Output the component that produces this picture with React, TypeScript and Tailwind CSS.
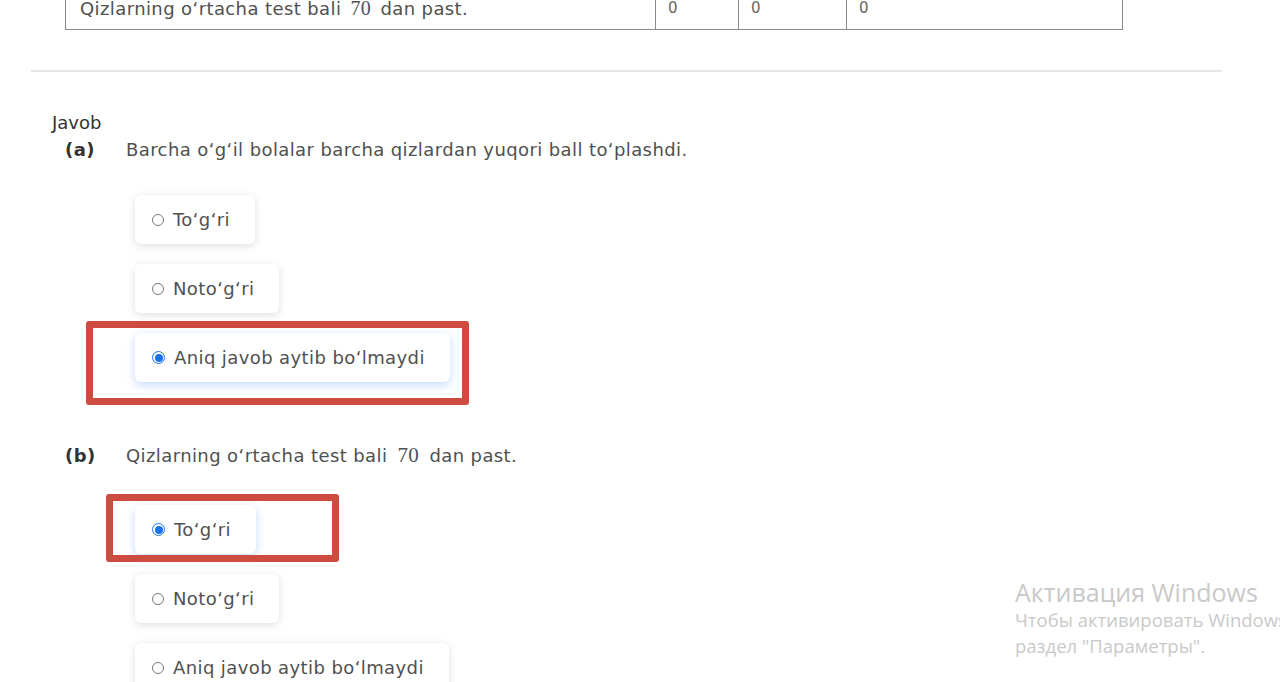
import React from 'react'

type Opt = { label: string; checked?: boolean; mark?: 'wide' | 'narrow' }

const partA: Opt[] = [
  { label: 'To‘g‘ri' },
  { label: 'Noto‘g‘ri' },
  { label: 'Aniq javob aytib bo‘lmaydi', checked: true, mark: 'wide' },
]

const partB: Opt[] = [
  { label: 'To‘g‘ri', checked: true, mark: 'narrow' },
  { label: 'Noto‘g‘ri' },
  { label: 'Aniq javob aytib bo‘lmaydi' },
]

function Radio({ checked }: { checked?: boolean }) {
  if (checked) {
    return (
      <span className="flex h-[13px] w-[13px] shrink-0 items-center justify-center rounded-full border border-[#1a73e8] bg-white">
        <span className="h-[8px] w-[8px] rounded-full bg-[#1a73e8]" />
      </span>
    )
  }
  return <span className="h-[12px] w-[12px] shrink-0 rounded-full border border-[#777]" />
}

function Option({ opt }: { opt: Opt }) {
  return (
    <div
      className={`relative flex h-[49px] items-center gap-[9px] rounded-md bg-white pl-[17px] pr-[25px] text-[18px] tracking-[0.4px] text-[#505050] ${
        opt.checked ? 'shadow-[0_3px_10px_rgba(40,120,255,0.28)]' : 'shadow-[0_2px_9px_rgba(0,0,0,0.13)]'
      }`}
    >
      <Radio checked={opt.checked} />
      <span>{opt.label}</span>
      {opt.mark === 'wide' && (
        <div className="absolute left-[-49px] top-[-12px] h-[84px] w-[383px] rounded-[3px] border-[7px] border-[#cd4b3f]" />
      )}
      {opt.mark === 'narrow' && (
        <div className="absolute left-[-29px] top-[-11px] h-[68px] w-[233px] rounded-[3px] border-[7px] border-[#cd4b3f]" />
      )}
    </div>
  )
}

export default function App() {
  return (
    <div className="relative h-[682px] w-[1280px] overflow-hidden bg-white font-['DejaVu_Sans',sans-serif] text-[#505050]">
      {/* tail of the result table */}
      <div className="ml-[65px] mt-[-13px] flex w-[1058px] border border-[#8a8a8a] text-[18px] leading-[26px] tracking-[0.4px]">
        <div className="w-[589px] px-[14px] py-[7px]">
          Qizlarning o‘rtacha test bali <span className="mx-[3px] font-['Liberation_Serif',serif] text-[20px]">70</span> dan past.
        </div>
        <div className="w-[83px] border-l border-[#8a8a8a] px-[12px] py-[7px] text-[15px] text-[#666]">0</div>
        <div className="w-[108px] border-l border-[#8a8a8a] px-[12px] py-[7px] text-[15px] text-[#666]">0</div>
        <div className="flex-1 border-l border-[#8a8a8a] px-[12px] py-[7px] text-[15px] text-[#666]">0</div>
      </div>

      <div className="ml-[31px] mt-[40px] h-[2px] w-[1191px] bg-[#e6e6e6]" />

      <div className="ml-[52px] mt-[39px] text-[18px] leading-[24px] text-[#333]">Javob</div>

      <div className="ml-[65px] mt-[3px] flex text-[18px] leading-[24px] tracking-[0.4px]">
        <span className="w-[61px] font-semibold text-[#333]">(a)</span>
        <span>Barcha o‘g‘il bolalar barcha qizlardan yuqori ball to‘plashdi.</span>
      </div>

      <div className="ml-[135px] mt-[33px] flex flex-col items-start gap-[20px]">
        {partA.map((o, i) => (
          <Option key={i} opt={o} />
        ))}
      </div>

      <div className="ml-[65px] mt-[61px] flex items-center text-[18px] leading-[24px] tracking-[0.4px]">
        <span className="w-[61px] font-semibold text-[#333]">(b)</span>
        <span>
          Qizlarning o‘rtacha test bali{' '}
          <span className="mx-[4px] font-['Liberation_Serif',serif] text-[21px]">70</span> dan past.
        </span>
      </div>

      <div className="ml-[135px] mt-[37px] flex flex-col items-start gap-[20px]">
        {partB.map((o, i) => (
          <Option key={i} opt={o} />
        ))}
      </div>

      {/* windows activation watermark */}
      <div className="pointer-events-none absolute left-[1015px] top-[577px] whitespace-nowrap font-['Open_Sans',sans-serif] text-[#c9c9c9]">
        <div className="text-[25px] leading-[30px]">Активация Windows</div>
        <div className="text-[18.5px] leading-[26px]">Чтобы активировать Windows, перейдите в</div>
        <div className="text-[18.5px] leading-[26px]">раздел "Параметры".</div>
      </div>
    </div>
  )
}
